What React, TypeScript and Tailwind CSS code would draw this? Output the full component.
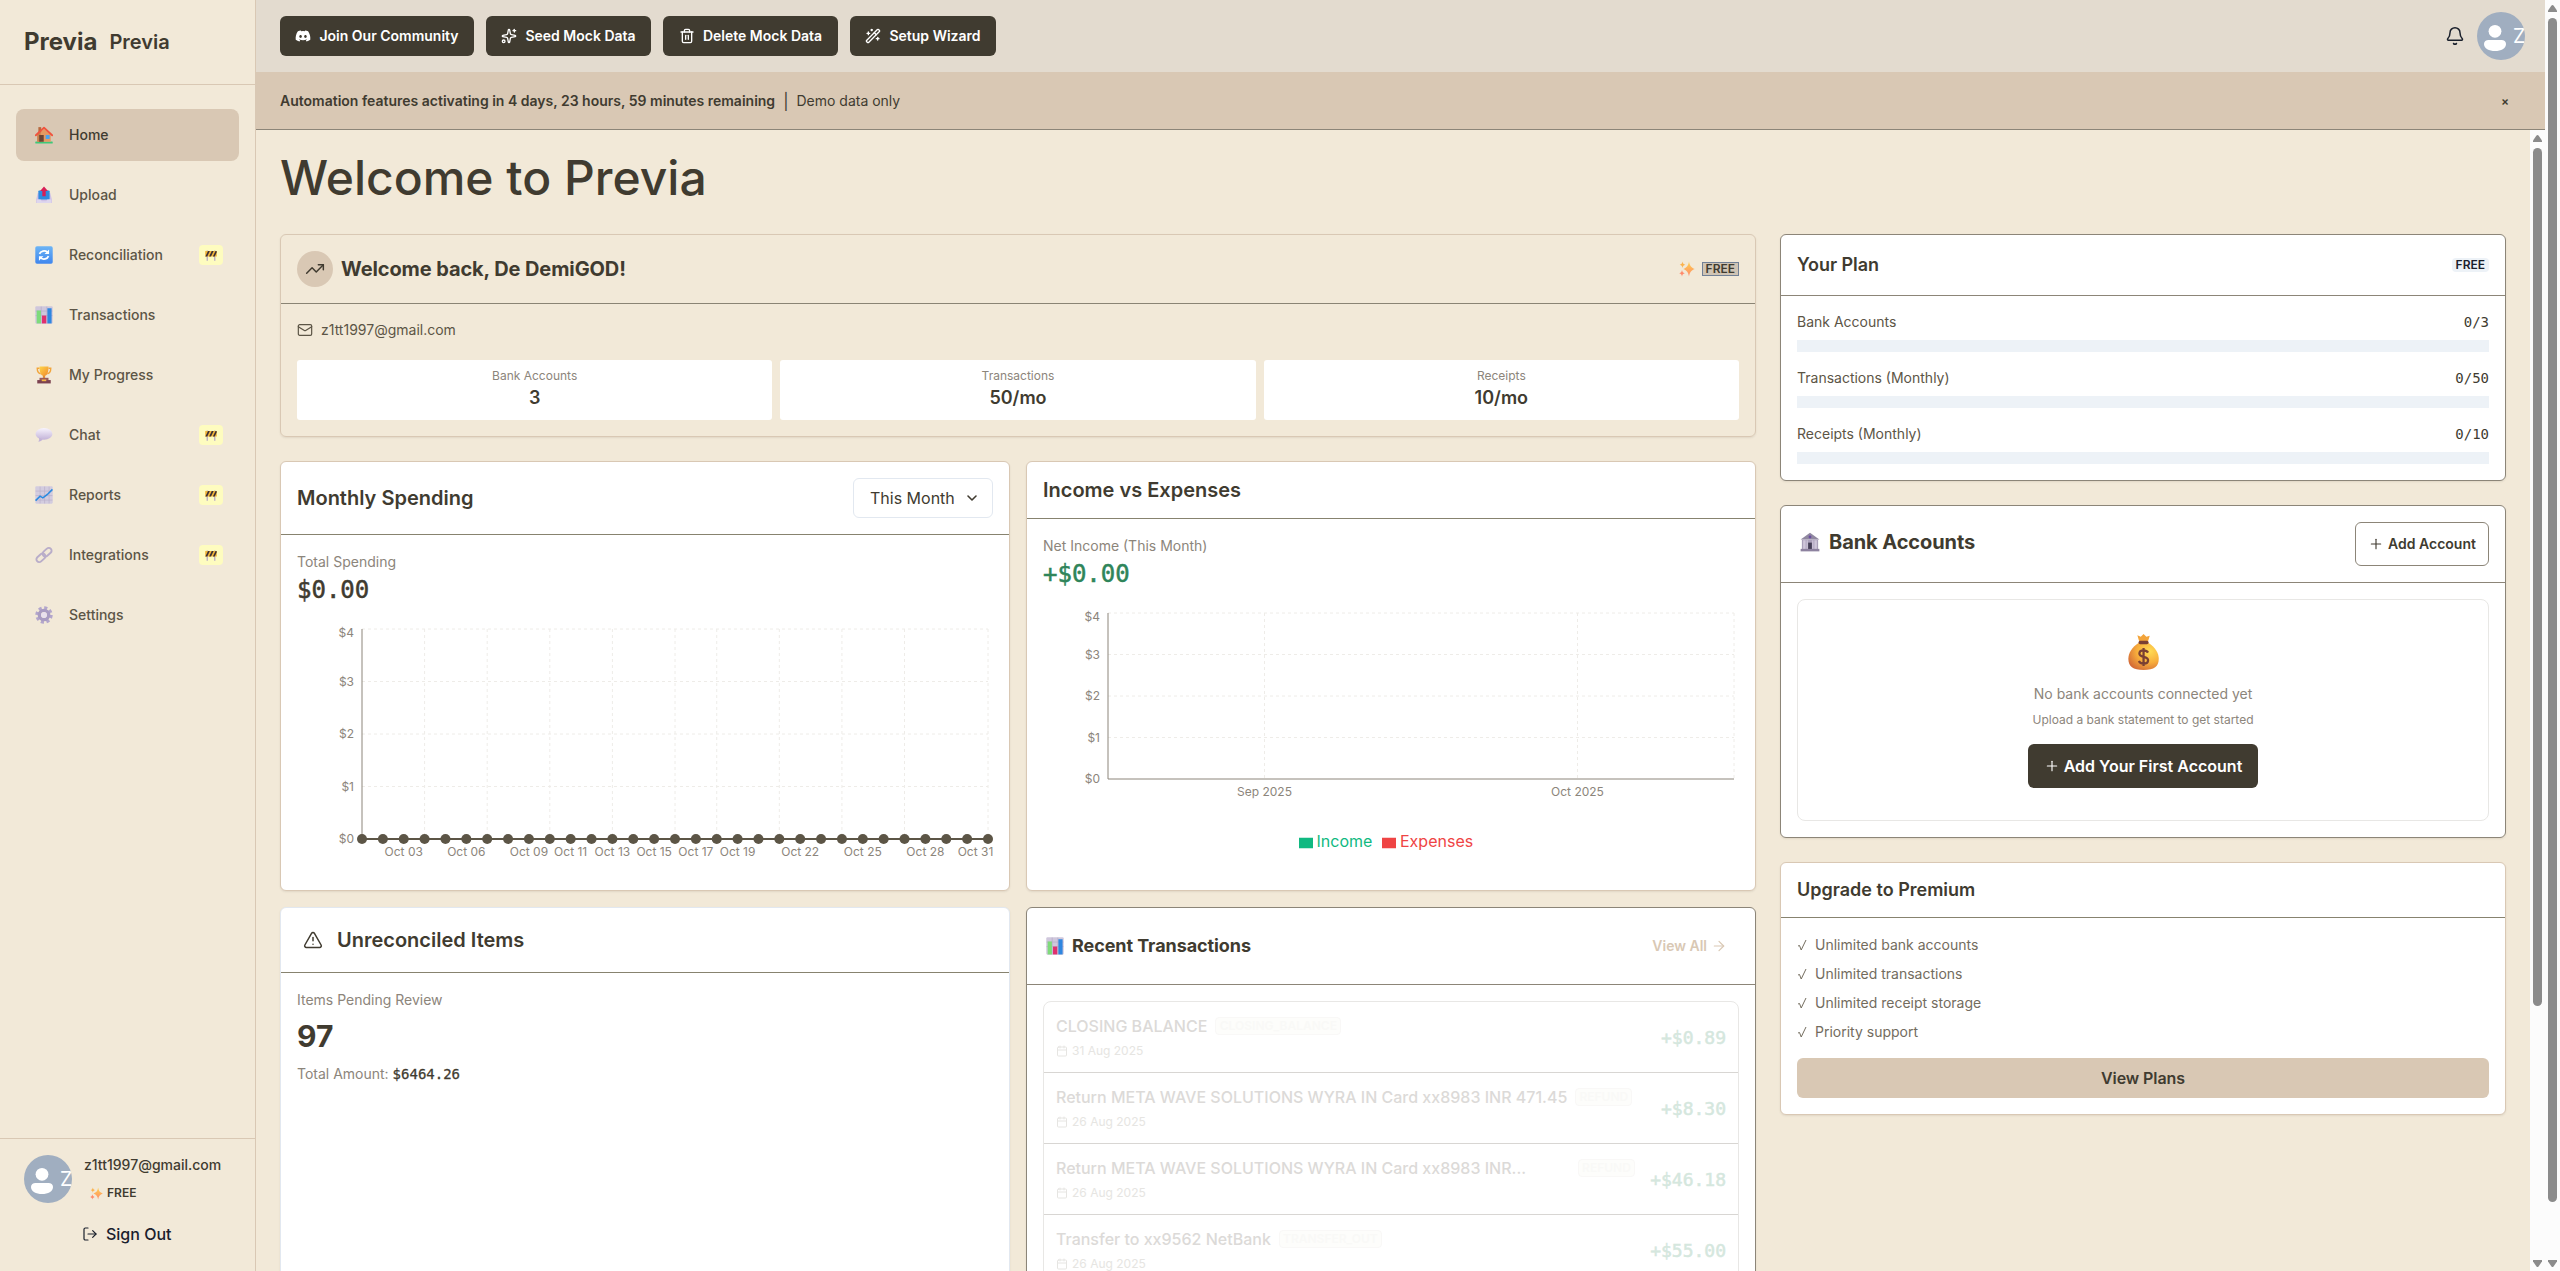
import type { ReactNode } from 'react';
import { Bell, Calendar, ChevronDown, Mail, Plus, Sparkles, Trash2, TrendingUp, TriangleAlert, WandSparkles, ArrowRight, LogOut } from 'lucide-react';
import { FaDiscord } from 'react-icons/fa';

type EmojiName =
  | 'home' | 'upload' | 'sync' | 'bars' | 'trophy' | 'chat' | 'trend' | 'link' | 'gear'
  | 'barrier' | 'sparkles' | 'bank' | 'bag';

function Gradients() {
  return (
    <svg width="0" height="0" className="absolute">
      <defs>
        <linearGradient id="gold" x1="0" y1="0" x2="1" y2="1">
          <stop offset="0" stopColor="#ffd54a" />
          <stop offset="1" stopColor="#f08a2c" />
        </linearGradient>
        <linearGradient id="spark" x1="0" y1="0" x2="0" y2="1">
          <stop offset="0" stopColor="#ffd24d" />
          <stop offset="1" stopColor="#ff8a6a" />
        </linearGradient>
        <linearGradient id="blue" x1="0" y1="0" x2="0" y2="1">
          <stop offset="0" stopColor="#6cb4f5" />
          <stop offset="1" stopColor="#3f86ee" />
        </linearGradient>
        <linearGradient id="lilac" x1="0" y1="0" x2="0" y2="1">
          <stop offset="0" stopColor="#f8f4fe" />
          <stop offset="1" stopColor="#c3b3d8" />
        </linearGradient>
        <radialGradient id="bagFill" cx="0.7" cy="0.3" r="0.85">
          <stop offset="0" stopColor="#ffdc55" />
          <stop offset="0.5" stopColor="#f8ae3c" />
          <stop offset="1" stopColor="#cf6337" />
        </radialGradient>
      </defs>
    </svg>
  );
}

const emojiArt: Record<EmojiName, ReactNode> = {
  home: (
    <>
      <rect x="0.500" y="27.500" width="31" height="3.500" rx="1" fill="#3fc878" />
      <path d="M4 15 16 5l12 10v13H4z" fill="#e39a63" />
      <path d="M4 15 10 10v18H4z" fill="#c9804c" />
      <rect x="6" y="2" width="5" height="9" fill="#b8683e" />
      <path d="M1.500 16.500 16 3 30.500 16.500" fill="none" stroke="#f0533e" strokeWidth="3.200" strokeLinecap="round" strokeLinejoin="round" />
      <rect x="7.500" y="16" width="8" height="12" fill="#6d4534" />
      <rect x="19" y="16" width="7" height="7" fill="#4aa3f0" />
    </>
  ),
  upload: (
    <>
      <path d="M5 12h22l3 12v6H2v-6z" fill="#cfc2e6" />
      <rect x="6" y="8" width="20" height="16" rx="1.500" fill="#2f8be0" />
      <path d="M3 24h7l2 3h8l2-3h7v6H3z" fill="#ded6ee" />
      <path d="M16 1 23 9h-4v9h-6V9H9z" fill="#d81f56" />
    </>
  ),
  sync: (
    <>
      <rect x="0.500" y="0.500" width="31" height="31" rx="3" fill="url(#blue)" />
      <path d="M8 14a8.500 7.500 0 0 1 14-3" fill="none" stroke="#fff" strokeWidth="3" />
      <path d="M24 18a8.500 7.500 0 0 1-14 3" fill="none" stroke="#fff" strokeWidth="3" />
      <path d="M25 6v8h-8z M7 26v-8h8z" fill="#fff" />
    </>
  ),
  bars: (
    <>
      <rect x="0.500" y="0.500" width="31" height="31" rx="2" fill="#cfc7dc" />
      <path d="M1 9h30M1 17h30M11 1v30M21 1v30" stroke="#b5aac8" strokeWidth="1.200" />
      <rect x="3" y="8" width="7.500" height="23" fill="#7edb7a" />
      <rect x="12.500" y="17" width="7.500" height="14" fill="#e0306e" />
      <rect x="22" y="4" width="7.500" height="27" fill="#2f86e0" />
    </>
  ),
  trophy: (
    <>
      <path d="M8 4H4c0 7 2 9 6 10M24 4h4c0 7-2 9-6 10" fill="none" stroke="#f2a53b" strokeWidth="2.500" />
      <path d="M8 1h16c0 11-2 16-8 17C10 17 8 12 8 1z" fill="url(#gold)" />
      <rect x="14" y="17" width="4" height="5" fill="#e58f33" />
      <path d="M8 21h16v5H8z" fill="#9a5a5a" />
      <path d="M4 25h24v6H4z" fill="#7c4250" />
      <rect x="12" y="24" width="8" height="3" fill="#f5b848" />
    </>
  ),
  chat: (
    <>
      <ellipse cx="16" cy="14" rx="15" ry="10.500" fill="url(#lilac)" />
      <path d="M7 21c1 3 0 5-1 7 3 0 6-2 8-4z" fill="#c3b3d8" />
    </>
  ),
  trend: (
    <>
      <rect x="0.500" y="0.500" width="31" height="31" rx="2" fill="#d3ccdf" />
      <path d="M1 9h30M1 17h30M1 25h30M9 1v30M17 1v30M25 1v30" stroke="#b9afca" strokeWidth="1.200" />
      <path d="M1 26 9 18l5 3 8-6 9-9" fill="none" stroke="#2a8ae0" strokeWidth="2.800" />
    </>
  ),
  link: (
    <g fill="none" stroke="#b9adc9" strokeWidth="3.400">
      <rect x="-9" y="-5" width="18" height="10" rx="5" transform="translate(21.500 11) rotate(-42)" />
      <rect x="-9" y="-5" width="18" height="10" rx="5" transform="translate(10.500 21) rotate(-42)" />
    </g>
  ),
  gear: (
    <>
      <circle cx="16" cy="16" r="12.500" fill="none" stroke="#b3a6cc" strokeWidth="6" strokeDasharray="5.400 4.410" />
      <circle cx="16" cy="16" r="8.300" fill="none" stroke="#a99cc2" strokeWidth="6" />
      <circle cx="16" cy="16" r="5" fill="#e8e0ee" />
    </>
  ),
  barrier: (
    <>
      <path d="M6 4v27M26 4v27" stroke="#b9abc6" strokeWidth="3.500" />
      <rect x="0.500" y="5" width="31" height="15" rx="1" fill="#f0b43a" />
      <path d="M1 20 8 5h5L6 20zM11 20 18 5h5l-7 15zM21 20 28 5h3v4l-5 11z" fill="#3b2f35" />
    </>
  ),
  sparkles: (
    <>
      <path d="M20 1c1.500 8.500 4 12 11.500 15-7.500 3-10 6.500-11.500 15-1.500-8.500-4-12-11.500-15C16 13 18.500 9.500 20 1z" fill="url(#spark)" />
      <path d="M7 1c.8 4 2 5.200 5.500 6.500C9 8.800 7.800 10 7 14c-.8-4-2-5.200-5.500-6.500C5 6.200 6.200 5 7 1z" fill="#fbb34f" />
      <path d="M6 18c.8 4 2 5.200 5.500 6.500C8 25.800 6.800 27 6 31c-.8-4-2-5.200-5.500-6.500C4 23.200 5.200 22 6 18z" fill="#ff8a6a" />
    </>
  ),
  bank: (
    <>
      <path d="M1 12 16 1l15 11z" fill="#9088a0" />
      <rect x="3" y="12" width="26" height="16" fill="#aaa0ba" />
      <path d="M5 13h4v14H5zM23 13h4v14h-4zM10.500 13h2v14h-2zM19.500 13h2v14h-2z" fill="#cfc6da" />
      <rect x="13" y="17" width="6" height="11" fill="#463f57" />
      <circle cx="16" cy="8" r="2.300" fill="#6a4ca0" />
      <rect x="1" y="27" width="30" height="4" fill="#8d829f" />
    </>
  ),
  bag: (
    <>
      <path d="M11 1l3 1.500L16.500 0 19 2.500 22 1.500 20 8h-7z" fill="#f3a43a" />
      <path d="M12 8h9c6 4 9 9 9 14 0 7-4 10-13.500 10S3 29 3 22c0-5 3-10 9-14z" fill="url(#bagFill)" />
      <rect x="12" y="6" width="9" height="3" rx="1.500" fill="#7a4033" />
      <path d="M20.500 16.500c-1-1.700-2.200-2-4-2-2.200 0-3.700 1-3.700 2.800 0 4.200 7.700 1.800 7.700 6 0 1.900-1.600 3-4 3-2 0-3.400-.7-4.200-2.300M16.500 12.500v16" fill="none" stroke="#7a4033" strokeWidth="2" />
    </>
  ),
};

function Emoji({ name, className }: { name: EmojiName; className: string }) {
  return (
    <svg viewBox="0 0 32 32" className={`shrink-0 ${className}`}>
      {emojiArt[name]}
    </svg>
  );
}

function Avatar() {
  return (
    <div className="flex size-12 shrink-0 items-center overflow-hidden rounded-full bg-[#a0aec0] text-white">
      <svg viewBox="0 0 36 48" className="h-12 w-9 shrink-0" fill="currentColor">
        <circle cx="18" cy="19.300" r="6.400" />
        <path d="M11.500 28h13c2.500 0 4.500 1.500 4.500 4 0 4.500-5 7-11 7s-11-2.500-11-7c0-2.500 2-4 4.500-4z" />
      </svg>
      <span className="text-[20px] leading-none">Z</span>
    </div>
  );
}

const nav: { label: string; icon: EmojiName; soon?: boolean }[] = [
  { label: 'Home', icon: 'home' },
  { label: 'Upload', icon: 'upload' },
  { label: 'Reconciliation', icon: 'sync', soon: true },
  { label: 'Transactions', icon: 'bars' },
  { label: 'My Progress', icon: 'trophy' },
  { label: 'Chat', icon: 'chat', soon: true },
  { label: 'Reports', icon: 'trend', soon: true },
  { label: 'Integrations', icon: 'link', soon: true },
  { label: 'Settings', icon: 'gear' },
];

function Sidebar() {
  return (
    <aside className="flex h-full w-64 shrink-0 flex-col border-r border-[#d9c8b4] bg-[#f2e9d8]">
      <div className="flex h-[85px] shrink-0 items-center gap-3 border-b border-[#d9c8b4] px-6 text-[#403b30]">
        <span className="text-2xl font-bold">Previa</span>
        <span className="text-xl font-semibold">Previa</span>
      </div>
      <nav className="flex grow flex-col gap-2 px-4 pt-6">
        {nav.map((item, i) => (
          <a
            key={item.label}
            className={`flex h-[52px] items-center rounded-lg px-4 text-sm font-medium ${i === 0 ? 'bg-[#d9c8b4] text-[#403b30]' : 'text-[#5c5546]'}`}
          >
            <span className="flex w-6 justify-center">
              <Emoji name={item.icon} className="size-[18px]" />
            </span>
            <span className="ml-[13px] grow">{item.label}</span>
            {item.soon && (
              <span className="flex h-5 w-6 items-center justify-center rounded-sm bg-[#fefcbf]">
                <Emoji name="barrier" className="size-3" />
              </span>
            )}
          </a>
        ))}
      </nav>
      <div className="h-[133px] shrink-0 border-t border-[#d9c8b4] pt-4">
        <div className="flex gap-3 pl-6">
          <Avatar />
          <div className="text-sm text-[#403b30]">
            <div className="leading-5 font-medium">z1tt1997@gmail.com</div>
            <div className="mt-2.5 flex items-center gap-1 pl-1.5 text-xs leading-4 font-semibold">
              <Emoji name="sparkles" className="size-[13px]" />
              FREE
            </div>
          </div>
        </div>
        <div className="mt-[19px] flex items-center gap-2 pl-[82px] text-base font-medium text-[#1a202c]">
          <LogOut className="size-4" strokeWidth={1.800} />
          Sign Out
        </div>
      </div>
    </aside>
  );
}

function ToolButton({ icon, label, width }: { icon: ReactNode; label: string; width: string }) {
  return (
    <button className={`flex h-10 items-center justify-center gap-2 rounded-md bg-[#403b30] text-sm font-semibold text-white ${width}`}>
      {icon}
      {label}
    </button>
  );
}

function TopBar() {
  return (
    <header className="flex h-[72px] shrink-0 items-center gap-3 bg-[#e3dbcf] pr-5 pl-6">
      <ToolButton width="w-[194px]" label="Join Our Community" icon={<FaDiscord className="size-4" />} />
      <ToolButton width="w-[165px]" label="Seed Mock Data" icon={<Sparkles className="size-4" strokeWidth={2} />} />
      <ToolButton width="w-[175px]" label="Delete Mock Data" icon={<Trash2 className="size-4" strokeWidth={2} />} />
      <ToolButton width="w-[146px]" label="Setup Wizard" icon={<WandSparkles className="size-4" strokeWidth={2} />} />
      <div className="ml-auto flex items-center gap-3">
        <Bell className="size-5 text-[#1a202c]" strokeWidth={1.800} />
        <Avatar />
      </div>
    </header>
  );
}

function Banner() {
  return (
    <div className="flex h-[58px] shrink-0 items-center border-b border-[#8c8578] bg-[#d9c8b4] pr-9 pl-6 text-sm text-[#403b30]">
      <span className="font-semibold">Automation features activating in 4 days, 23 hours, 59 minutes remaining</span>
      <span className="mx-2 text-base">|</span>
      <span>Demo data only</span>
      <span className="ml-auto text-xs leading-none font-semibold">×</span>
    </div>
  );
}

function Card({ border, className = '', children }: { border: string; className?: string; children: ReactNode }) {
  return (
    <section className={`rounded-md border shadow-[0_1px_2px_rgba(64,59,48,0.1)] ${border} ${className}`}>{children}</section>
  );
}

const stats = [
  ['Bank Accounts', '3'],
  ['Transactions', '50/mo'],
  ['Receipts', '10/mo'],
];

function ProfileCard() {
  return (
    <Card border="border-[#d9c8b4]" className="col-span-2 h-[203px]">
      <div className="flex h-[69px] items-center border-b border-[#8a8474] px-4">
        <span className="flex size-9 items-center justify-center rounded-full bg-[#d9c8b4] text-[#403b30]">
          <TrendingUp className="size-5" strokeWidth={1.800} />
        </span>
        <h2 className="ml-2 text-xl font-bold tracking-[-0.005em] text-[#403b30]">Welcome back, De DemiGOD!</h2>
        <Emoji name="sparkles" className="mr-[7px] ml-auto size-4" />
        <span className="flex h-3.5 items-center border border-[#718096] bg-[#d0c4b4] px-[3px] text-xs leading-none font-semibold text-[#403b30]">FREE</span>
      </div>
      <div className="flex items-center gap-2 px-4 pt-4 text-sm text-[#5c5546]">
        <Mail className="size-4" strokeWidth={1.800} />
        z1tt1997@gmail.com
      </div>
      <div className="mt-5 grid grid-cols-3 gap-2 px-4">
        {stats.map(([label, value]) => (
          <div key={label} className="flex h-[60px] flex-col items-center rounded-[3px] bg-white pt-2">
            <span className="text-xs leading-4 text-[#8c857b]">{label}</span>
            <span className="text-lg leading-7 font-semibold text-[#403b30]">{value}</span>
          </div>
        ))}
      </div>
    </Card>
  );
}

const MONO = 'font-["DejaVu_Sans_Mono",monospace]';
const MONO_HEAVY = 'font-["DejaVu_Sans_Mono",monospace] [-webkit-text-stroke:0.5px_currentColor]';

function Grid({ top, bottom, columns }: { top: number; bottom: number; columns: number[] }) {
  const step = (bottom - top) / 4;
  return (
    <g stroke="#eeece8" strokeWidth="1" strokeDasharray="3 3">
      {[0, 1, 2, 3].map((i) => (
        <line key={i} x1="65" x2="691" y1={top + i * step} y2={top + i * step} />
      ))}
      {columns.map((x) => (
        <line key={x} x1={x} x2={x} y1={top} y2={bottom} />
      ))}
    </g>
  );
}

function YLabels({ top, bottom }: { top: number; bottom: number }) {
  const step = (bottom - top) / 4;
  return (
    <g textAnchor="end">
      {[4, 3, 2, 1, 0].map((v, i) => (
        <text key={v} x="57" y={i === 0 ? top + 8 : top + i * step + 4.300}>{`$${v}`}</text>
      ))}
    </g>
  );
}

const dayStep = 626 / 30;
const dayTicks = [3, 6, 9, 11, 13, 15, 17, 19, 22, 25, 28, 31];
const gridDays = [3, 6, 9, 12, 15, 17, 20, 23, 26, 30];

function SpendingCard() {
  return (
    <Card border="border-[#d9c8b4]" className="h-[430px] bg-white">
      <div className="flex h-[73px] items-center justify-between border-b border-[#87836f] px-4">
        <h2 className="text-xl font-semibold text-[#403b30]">Monthly Spending</h2>
        <div className="flex h-10 w-[140px] items-center justify-between rounded-md border border-[#e2e8f0] pr-3 pl-4 text-base text-[#403b30]">
          This Month
          <ChevronDown className="size-4" strokeWidth={2.400} />
        </div>
      </div>
      <div className="px-4 pt-[17px]">
        <div className="text-sm text-[#8c857b]">Total Spending</div>
        <div className={`mt-0.5 text-2xl leading-8 text-[#403b30] ${MONO_HEAVY}`}>$0.00</div>
        <svg width="696" height="250" className="mt-[18px] overflow-visible text-xs" fill="#8c857b">
          <Grid top={5} bottom={215} columns={gridDays.map((d) => 65 + d * dayStep)} />
          <line x1="65" x2="65" y1="5" y2="215" stroke="#8c857b" />
          <YLabels top={5} bottom={215} />
          <line x1="65" x2="691" y1="215" y2="215" stroke="#5c5546" strokeWidth="2" />
          {Array.from({ length: 31 }, (_, i) => (
            <circle key={i} cx={65 + i * dayStep} cy="215" r="5" fill="#5c5546" />
          ))}
          <g textAnchor="middle">
            {dayTicks.map((d) => (
              <text key={d} x={Math.min(65 + (d - 1) * dayStep, 678.500)} y="232">
                {`Oct ${String(d).padStart(2, '0')}`}
              </text>
            ))}
          </g>
        </svg>
      </div>
    </Card>
  );
}

function IncomeCard() {
  return (
    <Card border="border-[#d9c8b4]" className="h-[430px] bg-white">
      <div className="flex h-[57px] items-center border-b border-[#87836f] px-4">
        <h2 className="text-xl font-semibold text-[#403b30]">Income vs Expenses</h2>
      </div>
      <div className="px-4 pt-[17px]">
        <div className="text-sm text-[#8c857b]">Net Income (This Month)</div>
        <div className={`mt-0.5 text-2xl leading-8 text-[#2f855a] ${MONO_HEAVY}`}>+$0.00</div>
        <svg width="696" height="250" className="mt-[18px] overflow-visible text-xs" fill="#8c857b">
          <Grid top={5} bottom={171} columns={[221.500, 534.500, 691]} />
          <path d="M65 5V171H691" fill="none" stroke="#8c857b" />
          <YLabels top={5} bottom={171} />
          <g textAnchor="middle">
            <text x="221.500" y="188">Sep 2025</text>
            <text x="534.500" y="188">Oct 2025</text>
          </g>
          <rect x="256" y="229.750" width="14" height="10.500" fill="#10b981" />
          <text x="273.500" y="239" className="text-base" fill="#10b981">Income</text>
          <rect x="339" y="229.750" width="14" height="10.500" fill="#ef4444" />
          <text x="357" y="239" className="text-base" fill="#ef4444">Expenses</text>
        </svg>
      </div>
    </Card>
  );
}

function UnreconciledCard() {
  return (
    <Card border="border-[#e2e8f0]" className="h-[430px] bg-white">
      <div className="flex h-[65px] items-center border-b border-[#87836f] px-4">
        <span className="flex w-8 justify-center text-[#403b30]">
          <TriangleAlert className="size-5" strokeWidth={1.800} />
        </span>
        <h2 className="ml-2 text-xl font-semibold text-[#403b30]">Unreconciled Items</h2>
      </div>
      <div className="px-4 pt-[17px] text-sm text-[#8c857b]">
        <div>Items Pending Review</div>
        <div className="mt-2 text-[30px] leading-9 font-bold text-[#403b30]">97</div>
        <div className="mt-2.5">
          Total Amount: <span className={`text-[#403b30] [-webkit-text-stroke:0.3px_currentColor] ${MONO}`}>$6464.26</span>
        </div>
      </div>
    </Card>
  );
}

const transactions = [
  { title: 'CLOSING BALANCE', tag: 'CLOSING_BALANCE', date: '31 Aug 2025', amount: '+$0.89', width: 'w-auto', tagWidth: 'w-[126px]' },
  { title: 'Return META WAVE SOLUTIONS WYRA IN Card xx8983 INR 471.45', tag: 'REFUND', date: '26 Aug 2025', amount: '+$8.30', width: 'w-auto', tagWidth: 'w-[57px]' },
  { title: 'Return META WAVE SOLUTIONS WYRA IN Card xx8983 INR...', tag: 'REFUND', date: '26 Aug 2025', amount: '+$46.18', width: 'w-[514px]', tagWidth: 'w-[57px]' },
  { title: 'Transfer to xx9562 NetBank', tag: 'TRANSFER_OUT', date: '26 Aug 2025', amount: '+$55.00', width: 'w-auto', tagWidth: 'w-[103px]' },
];

function RecentCard() {
  return (
    <Card border="border-[#8c8578]" className="h-[430px] bg-white">
      <div className="flex h-[77px] items-center border-b border-[#8c8578] pr-4 pl-[19px]">
        <Emoji name="bars" className="size-[18px]" />
        <h2 className="ml-2 text-lg font-bold tracking-[-0.004em] text-[#403b30]">Recent Transactions</h2>
        <span className="mr-3 ml-auto flex items-center gap-1 text-sm font-semibold text-[#d9c8b4]">
          View All
          <ArrowRight className="size-4" strokeWidth={1.800} />
        </span>
      </div>
      <div className="mx-4 mt-4 rounded-lg border border-[#e8e7e5]">
        {transactions.map((t) => (
          <div key={t.title} className="flex h-[71px] items-start border-b border-[#d8d6d3] px-3">
            <div className="grow pt-3">
              <div className="flex h-6 items-center">
                <span className={`text-base font-medium whitespace-nowrap text-[#dcdad8] ${t.width}`}>{t.title}</span>
                <span className={`ml-2 flex h-[18px] items-center justify-center rounded-sm border border-[#f9f8f7] bg-[#fdfdfb] text-xs leading-none font-semibold text-[#f9f9f7] ${t.tagWidth}`}>
                  {t.tag}
                </span>
              </div>
              <div className="mt-[5px] flex items-center gap-1 text-xs leading-4 text-[#e6e5e2]">
                <Calendar className="size-3" />
                {t.date}
              </div>
            </div>
            <span className={`pt-[22px] text-lg leading-7 text-[#d5e7de] ${MONO_HEAVY}`}>{t.amount}</span>
          </div>
        ))}
      </div>
    </Card>
  );
}

const usage = [
  ['Bank Accounts', '0/3'],
  ['Transactions (Monthly)', '0/50'],
  ['Receipts (Monthly)', '0/10'],
];

function PlanCard() {
  return (
    <Card border="border-[#8c8578]" className="bg-white">
      <div className="flex h-[61px] items-center justify-between border-b border-[#8c8578] px-4">
        <h2 className="text-lg font-semibold tracking-[-0.003em] text-[#403b30]">Your Plan</h2>
        <span className="flex h-3.5 items-center rounded-sm bg-[#edf2f7] px-1 text-xs leading-none font-semibold text-[#1a202c]">FREE</span>
      </div>
      <div className="flex flex-col gap-4 p-4">
        {usage.map(([label, value]) => (
          <div key={label}>
            <div className="flex justify-between text-sm text-[#5c5546]">
              <span>{label}</span>
              <span className={`text-[#403b30] ${MONO}`}>{value}</span>
            </div>
            <div className="mt-2 h-3 bg-[#edf2f7]" />
          </div>
        ))}
      </div>
    </Card>
  );
}

function BankCard() {
  return (
    <Card border="border-[#8c8578]" className="h-[333px] bg-white">
      <div className="flex h-[77px] items-start border-b border-[#8c8578] px-4 pt-4">
        <div className="flex h-10 items-center pl-[3px]">
          <Emoji name="bank" className="size-5" />
          <h2 className="ml-[9px] text-xl font-bold tracking-[-0.004em] text-[#403b30]">Bank Accounts</h2>
        </div>
        <button className="ml-auto flex h-11 w-[134px] items-center justify-center gap-1 rounded-md border border-[#8c8578] text-sm font-semibold text-[#403b30]">
          <Plus className="size-4" strokeWidth={1.700} />
          Add Account
        </button>
      </div>
      <div className="mx-4 mt-4 flex h-[222px] flex-col items-center rounded-lg border border-[#e8e7e5] pt-[34px]">
        <Emoji name="bag" className="size-9" />
        <p className="mt-[14px] text-sm text-[#8c857b]">No bank accounts connected yet</p>
        <p className="mt-2 text-xs text-[#8c857b]">Upload a bank statement to get started</p>
        <button className="mt-4 flex h-11 w-[230px] items-center justify-center gap-1 rounded-md bg-[#403b30] text-base font-semibold text-white">
          <Plus className="size-4" strokeWidth={1.700} />
          Add Your First Account
        </button>
      </div>
    </Card>
  );
}

const perks = ['Unlimited bank accounts', 'Unlimited transactions', 'Unlimited receipt storage', 'Priority support'];

function UpgradeCard() {
  return (
    <Card border="border-[#d9c8b4]" className="h-[253px] bg-white">
      <div className="flex h-[55px] items-center border-b border-[#87836f] px-4">
        <h2 className="text-lg font-semibold text-[#403b30]">Upgrade to Premium</h2>
      </div>
      <ul className="flex flex-col gap-2 px-4 pt-4 text-sm leading-[21px] text-[#736c5e]">
        {perks.map((p) => (
          <li key={p} className="flex items-center">
            <svg viewBox="0 0 10 12" className="mr-2 h-3 w-2.5" fill="none" stroke="currentColor">
              <path d="M1 7 2.500 6.500 4.200 11 9 1" />
            </svg>
            {p}
          </li>
        ))}
      </ul>
      <button className="mx-4 mt-4 h-10 w-[692px] rounded-md bg-[#d9c8b4] text-base font-semibold tracking-[-0.005em] text-[#403b30]">View Plans</button>
    </Card>
  );
}

function ScrollBar({ thumb }: { thumb: string }) {
  return (
    <div className="flex h-full w-[15px] shrink-0 flex-col items-center bg-[#fcfcfc] pt-[5px] pb-1">
      <svg viewBox="0 0 9 7" className="h-[7px] w-[9px] shrink-0" fill="#8b8b8b">
        <path d="M3.500.6a1.300 1.300 0 0 1 2 0L9 5.500V7H0V5.500z" />
      </svg>
      <div className={`mt-1.5 w-[9px] shrink-0 rounded-full bg-[#8b8b8b] ${thumb}`} />
      <svg viewBox="0 0 9 7" className="mt-auto h-[7px] w-[9px] shrink-0" fill="#8b8b8b">
        <path d="M3.500 6.400a1.300 1.300 0 0 0 2 0L9 1.500V0H0v1.500z" />
      </svg>
    </div>
  );
}

export default function App() {
  return (
    <div className='flex h-[1271px] w-[2560px] overflow-hidden bg-[#f2e9d8] font-["Inter",sans-serif]'>
      <Gradients />
      <Sidebar />
      <div className="flex h-full grow flex-col">
        <TopBar />
        <Banner />
        <div className="flex min-h-0 grow">
          <main className="h-full grow overflow-hidden px-6 pt-6">
            <h1 className="text-5xl leading-[48px] font-medium text-[#403b30]">Welcome to Previa</h1>
            <div className="mt-8 grid grid-cols-3 items-start gap-6">
              <div className="col-span-2 grid grid-cols-2 gap-x-4">
                <ProfileCard />
                <div className="col-span-2 mt-6 grid grid-cols-2 gap-4">
                  <SpendingCard />
                  <IncomeCard />
                  <UnreconciledCard />
                  <RecentCard />
                </div>
              </div>
              <div className="flex flex-col gap-6">
                <PlanCard />
                <BankCard />
                <UpgradeCard />
              </div>
            </div>
          </main>
          <ScrollBar thumb="h-[858px]" />
        </div>
      </div>
      <ScrollBar thumb="h-[1184px]" />
    </div>
  );
}
